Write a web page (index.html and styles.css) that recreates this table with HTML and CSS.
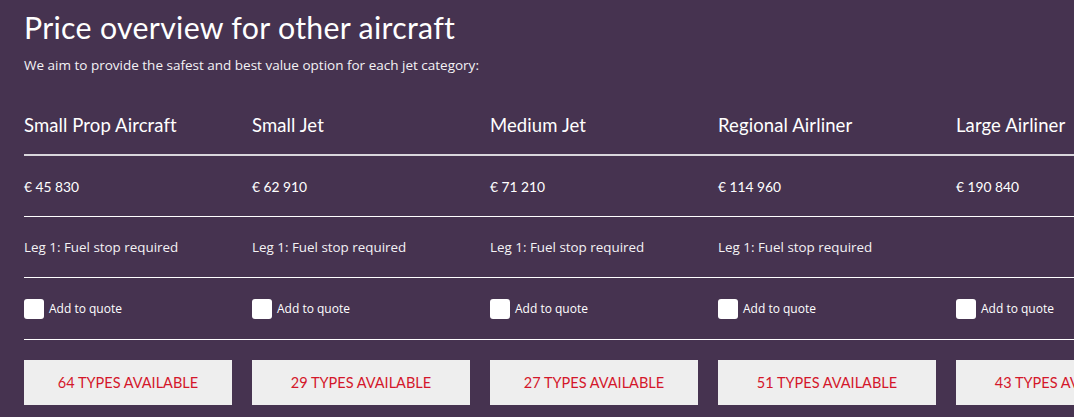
FILE: index.html
```html
<!DOCTYPE html>
<html lang="en">
<head>
<meta charset="utf-8">
<title>Price overview</title>
<link rel="stylesheet" href="styles.css">
</head>
<body>
<section class="overview">
  <h1 class="title">Price overview for other aircraft</h1>
  <p class="intro">We aim to provide the safest and best value option for each jet category:</p>
  <div class="grid">
    <div class="cell head c1">Small Prop Aircraft</div>
    <div class="cell head c2">Small Jet</div>
    <div class="cell head c3">Medium Jet</div>
    <div class="cell head c4">Regional Airliner</div>
    <div class="cell head c5">Large Airliner</div>

    <div class="cell price">€ 45 830</div>
    <div class="cell price">€ 62 910</div>
    <div class="cell price">€ 71 210</div>
    <div class="cell price">€ 114 960</div>
    <div class="cell price">€ 190 840</div>

    <div class="cell leg">Leg 1: Fuel stop required</div>
    <div class="cell leg">Leg 1: Fuel stop required</div>
    <div class="cell leg">Leg 1: Fuel stop required</div>
    <div class="cell leg">Leg 1: Fuel stop required</div>
    <div class="cell leg"></div>

    <label class="cell quote"><input type="checkbox" class="box"><span>Add to quote</span></label>
    <label class="cell quote"><input type="checkbox" class="box"><span>Add to quote</span></label>
    <label class="cell quote"><input type="checkbox" class="box"><span>Add to quote</span></label>
    <label class="cell quote"><input type="checkbox" class="box"><span>Add to quote</span></label>
    <label class="cell quote"><input type="checkbox" class="box"><span>Add to quote</span></label>

    <div class="cell action"><button class="types">64 TYPES AVAILABLE</button></div>
    <div class="cell action"><button class="types">29 TYPES AVAILABLE</button></div>
    <div class="cell action"><button class="types">27 TYPES AVAILABLE</button></div>
    <div class="cell action"><button class="types">51 TYPES AVAILABLE</button></div>
    <div class="cell action"><button class="types">43 TYPES AVAILABLE</button></div>
  </div>
</section>
</body>
</html>
```

FILE: styles.css
```css
html, body {
  margin: 0;
  padding: 0;
  background: #463350;
  overflow: hidden;
}

.overview {
  padding: 9px 0 0 24px;
  color: #ffffff;
  font-family: "Open Sans", "Liberation Sans", sans-serif;
  width: 1250px;
}

.title {
  margin: 0;
  font-family: "Lato", "Open Sans", sans-serif;
  font-weight: 400;
  font-size: 30.3px;
  line-height: 36px;
  letter-spacing: 0.3px;
}

.intro {
  margin: 11px 0 0 0;
  font-size: 13.5px;
  line-height: 18px;
  color: #f4f2f5;
}

.grid {
  display: grid;
  grid-template-columns: 228px 238px 228px 238px 238px;
  margin-top: 25px;
}

.cell {
  display: flex;
  align-items: center;
  border-bottom: 1px solid #ffffff;
}

.head {
  height: 51px;
  padding-bottom: 4px;
  border-bottom: 2px solid #d9d6dc;
  font-family: "Lato", "Open Sans", sans-serif;
  font-size: 18.5px;
  letter-spacing: 0.1px;
}

.price {
  height: 60px;
  font-family: "Lato", "Open Sans", sans-serif;
  font-size: 13.8px;
}

.leg {
  height: 60px;
  font-size: 13.4px;
  color: #f4f2f5;
}

.quote {
  height: 61px;
  font-size: 12px;
  gap: 5px;
}

.box {
  appearance: none;
  -webkit-appearance: none;
  margin: 0;
  width: 20px;
  height: 20px;
  border-radius: 3px;
  background: #ffffff;
}

.action {
  border-bottom: none;
  padding-top: 20px;
}

.types {
  width: calc(100% - 20px);
  height: 45px;
  border: none;
  background: #eeeeee;
  color: #d4172b;
  font-family: "Lato", "Open Sans", sans-serif;
  font-size: 14.5px;
  padding: 0;
  flex-shrink: 0;
}
```
